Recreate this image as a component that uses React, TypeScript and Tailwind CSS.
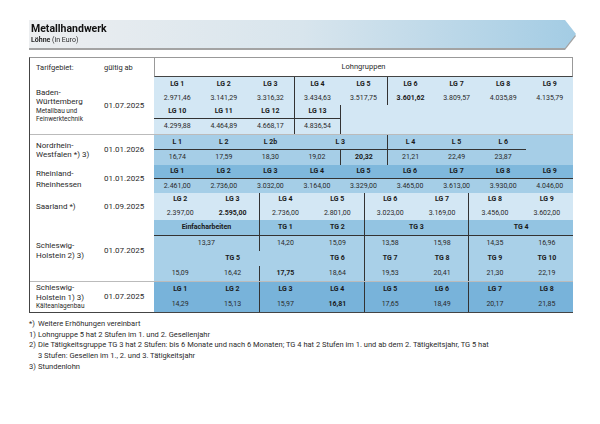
import React from 'react';

type Cell = [string, number?, string?];

const span: Record<number, string> = { 1: '', 2: 'col-span-2', 3: 'col-span-3', 5: 'col-span-5' };

// line helpers
const L = 'border-l border-[#333]';
const D = 'border-b border-[#333]';
const B = 'font-bold text-[#1a1a1a]';

const Row = ({ cols, h, bg, cells }: { cols: string; h: string; bg: string; cells: Cell[] }) => (
    <div className={`grid ${cols} ${h} ${bg}`}>
        {cells.map(([t, s = 1, x = ''], i) => (
            <div key={i} className={`flex items-center justify-center whitespace-nowrap ${span[s]} ${x}`}>
                {t}
            </div>
        ))}
    </div>
);

type RowDef = { cols: string; h: string; bg: string; cells: Cell[] };

const Sub = ({ children }: { children: React.ReactNode }) => (
    <div className="text-[6.5px] leading-[8.5px]">{children}</div>
);

const sections: { label: React.ReactNode; date: string; top?: string; rows: RowDef[] }[] = [
    {
        label: (
            <>
                <div>Baden-</div>
                <div>Württemberg</div>
                <Sub>Metallbau und</Sub>
                <Sub>Feinwerktechnik</Sub>
            </>
        ),
        date: '01.07.2025',
        rows: [
            {
                cols: 'grid-cols-9', h: 'h-[14px]', bg: 'bg-[#d3e7f4]',
                cells: [['LG 1', 1, B], ['LG 2', 1, B], ['LG 3', 1, B], ['LG 4', 1, `${B} ${L}`], ['LG 5', 1, B], ['LG 6', 1, `${B} ${L}`], ['LG 7', 1, B], ['LG 8', 1, B], ['LG 9', 1, B]],
            },
            {
                cols: 'grid-cols-9', h: 'h-[14px]', bg: 'bg-[#d3e7f4]',
                cells: [['2.971,46'], ['3.141,29'], ['3.316,32'], ['3.434,63', 1, L], ['3.517,75'], ['3.601,62', 1, `${B} ${L}`], ['3.809,57'], ['4.035,89'], ['4.135,79']],
            },
            {
                cols: 'grid-cols-9', h: 'h-[14px]', bg: 'bg-[#d3e7f4]',
                cells: [['LG 10', 1, `${B} ${D}`], ['LG 11', 1, `${B} ${D}`], ['LG 12', 1, `${B} ${D}`], ['LG 13', 1, `${B} ${D} ${L}`], ['', 5, L]],
            },
            {
                cols: 'grid-cols-9', h: 'h-[15px]', bg: 'bg-[#d3e7f4]',
                cells: [['4.299,88'], ['4.464,89'], ['4.668,17'], ['4.836,54', 1, L], ['', 5, L]],
            },
        ],
    },
    {
        label: (
            <>
                <div>Nordrhein-</div>
                <div>Westfalen *) 3)</div>
            </>
        ),
        date: '01.01.2026',
        top: 'border-t border-[#bbb]',
        rows: [
            {
                cols: 'grid-cols-9', h: 'h-[15px]', bg: 'bg-[#a6cee7]',
                cells: [['L 1', 1, `${B} ${D}`], ['L 2', 1, `${B} ${D}`], ['L 2b', 1, `${B} ${D}`], ['L 3', 2, `${B} ${D}`], ['L 4', 1, `${B} ${D} ${L}`], ['L 5', 1, `${B} ${D}`], ['L 6', 1, `${B} ${D}`], ['']],
            },
            {
                cols: 'grid-cols-9', h: 'h-[15px]', bg: 'bg-[#a6cee7]',
                cells: [['16,74'], ['17,59'], ['18,30'], ['19,02'], ['20,32', 1, `${B} ${L}`], ['21,21', 1, L], ['22,49'], ['23,87'], ['']],
            },
        ],
    },
    {
        label: (
            <>
                <div className="mb-[2px]">Rheinland-</div>
                <div>Rheinhessen</div>
            </>
        ),
        date: '01.01.2025',
        rows: [
            {
                cols: 'grid-cols-9', h: 'h-[14px]', bg: 'bg-[#7fb8dc]',
                cells: ['LG 1', 'LG 2', 'LG 3', 'LG 4', 'LG 5', 'LG 6', 'LG 7', 'LG 8', 'LG 9'].map((t) => [t, 1, `${B} ${D}`] as Cell),
            },
            {
                cols: 'grid-cols-9', h: 'h-[14px]', bg: 'bg-[#a5cee7]',
                cells: ['2.461,00', '2.736,00', '3.032,00', '3.164,00', '3.329,00', '3.465,00', '3.613,00', '3.930,00', '4.046,00'].map((t) => [t] as Cell),
            },
        ],
    },
    {
        label: <div>Saarland *)</div>,
        date: '01.09.2025',
        rows: [
            {
                cols: 'grid-cols-8', h: 'h-[13px]', bg: 'bg-[#d3e7f4]',
                cells: [['LG 2', 1, B], ['LG 3', 1, B], ['LG 4', 1, `${B} ${L}`], ['LG 5', 1, B], ['LG 6', 1, `${B} ${L}`], ['LG 7', 1, B], ['LG 8', 1, `${B} ${L}`], ['LG 9', 1, B]],
            },
            {
                cols: 'grid-cols-8', h: 'h-[14px]', bg: 'bg-[#d3e7f4]',
                cells: [['2.397,00'], ['2.595,00', 1, B], ['2.736,00', 1, L], ['2.801,00'], ['3.023,00', 1, L], ['3.169,00'], ['3.456,00', 1, L], ['3.602,00']],
            },
        ],
    },
    {
        label: (
            <>
                <div>Schleswig-</div>
                <div>Holstein 2) 3)</div>
            </>
        ),
        date: '01.07.2025',
        rows: [
            {
                cols: 'grid-cols-8', h: 'h-[16px]', bg: 'bg-[#93c4e2]',
                cells: [['Einfacharbeiten', 2, `${B} ${D}`], ['TG 1', 1, `${B} ${D} ${L}`], ['TG 2', 1, `${B} ${D}`], ['TG 3', 2, `${B} ${D} ${L}`], ['TG 4', 2, `${B} ${D} ${L}`]],
            },
            {
                cols: 'grid-cols-8', h: 'h-[15px]', bg: 'bg-[#a9d0e8]',
                cells: [['13,37', 2], ['14,20', 1, L], ['15,09'], ['13,58', 1, L], ['15,98'], ['14,35', 1, L], ['16,96']],
            },
            {
                cols: 'grid-cols-8', h: 'h-[15px]', bg: 'bg-[#a9d0e8]',
                cells: [['TG 5', 3, B], ['TG 6', 1, B], ['TG 7', 1, `${B} ${L}`], ['TG 8', 1, B], ['TG 9', 1, `${B} ${L}`], ['TG 10', 1, B]],
            },
            {
                cols: 'grid-cols-8', h: 'h-[15px]', bg: 'bg-[#a9d0e8]',
                cells: [['15,09'], ['16,42'], ['17,75', 1, `${B} ${L}`], ['18,64'], ['19,53', 1, L], ['20,41'], ['21,30', 1, L], ['22,19']],
            },
        ],
    },
    {
        label: (
            <>
                <div>Schleswig-</div>
                <div>Holstein 1) 3)</div>
                <Sub>Kälteanlagenbau</Sub>
            </>
        ),
        date: '01.07.2025',
        top: 'border-t border-[#bbb]',
        rows: [
            {
                cols: 'grid-cols-8', h: 'h-[15px]', bg: 'bg-[#78b3da]',
                cells: [['LG 1', 1, B], ['LG 2', 1, B], ['LG 3', 1, `${B} ${L}`], ['LG 4', 1, B], ['LG 5', 1, `${B} ${L}`], ['LG 6', 1, B], ['LG 7', 1, `${B} ${L}`], ['LG 8', 1, B]],
            },
            {
                cols: 'grid-cols-8', h: 'h-[15px]', bg: 'bg-[#78b3da]',
                cells: [['14,29'], ['15,13'], ['15,97', 1, L], ['16,81', 1, B], ['17,65', 1, L], ['18,49'], ['20,17', 1, L], ['21,85']],
            },
        ],
    },
];

const notes: [string, React.ReactNode][] = [
    ['*)', 'Weitere Erhöhungen vereinbart'],
    ['1)', 'Lohngruppe 5 hat 2 Stufen im 1. und 2. Gesellenjahr'],
    [
        '2)',
        <>
            Die Tätigkeitsgruppe TG 3 hat 2 Stufen: bis 6 Monate und nach 6 Monaten; TG 4 hat 2 Stufen im 1. und ab dem 2. Tätigkeitsjahr, TG 5 hat
            <br />3 Stufen: Gesellen im 1., 2. und 3. Tätigkeitsjahr
        </>,
    ],
    ['3)', 'Stundenlohn'],
];

export default function App() {
    return (
        <div className="w-[600px] h-[424px] bg-white overflow-hidden font-['Roboto',sans-serif] text-[#2a2a2a]">
            <div className="pl-[29px] pt-[20px]">
                {/* Title banner with arrow tip */}
                <div className="w-[547px] drop-shadow-[0_2px_0_#a3a3a3]">
                    <div className="h-[28px] pl-[2px] pt-[3px] bg-gradient-to-r from-[#eceef0] via-[#d8e5ed] to-[#a3cce4] [clip-path:polygon(0_0,calc(100%-11px)_0,100%_50%,calc(100%-11px)_100%,0_100%)]">
                        <div className="text-[10.5px] font-bold leading-[12px] text-[#111]">Metallhandwerk</div>
                        <div className="text-[7px] leading-[10px]"><span className="font-bold">Löhne</span> (in Euro)</div>
                    </div>
                </div>

                {/* Table */}
                <div className="mt-[9px] w-[544px] border-l border-b border-[#444] border-t border-t-[#999] text-[7px] leading-none">
                    <div className="flex h-[19px] text-[7.5px]">
                        <div className="w-[71px] pl-[6px] flex items-center">Tarifgebiet:</div>
                        <div className="w-[53px] pl-[3px] flex items-center">gültig ab</div>
                        <div className="flex-1 flex items-center justify-center border-l border-r border-[#999] border-b border-b-[#444]">Lohngruppen</div>
                    </div>
                    {sections.map((s, i) => (
                        <div key={i} className={`flex ${s.top ?? ''}`}>
                            <div className="w-[71px] pl-[6px] flex flex-col justify-center text-[8px] leading-[9.5px]">{s.label}</div>
                            <div className="w-[53px] pl-[3px] flex items-center text-[8px]">{s.date}</div>
                            <div className="flex-1 flex flex-col">
                                {s.rows.map((r, j) => (
                                    <Row key={j} {...r} />
                                ))}
                            </div>
                        </div>
                    ))}
                </div>

                {/* Footnotes */}
                <div className="mt-[6px] text-[7.5px] leading-[10.7px]">
                    {notes.map(([k, t]) => (
                        <div key={k} className="flex">
                            <span className="w-[9px] shrink-0">{k}</span>
                            <span>{t}</span>
                        </div>
                    ))}
                </div>
            </div>
        </div>
    );
}
